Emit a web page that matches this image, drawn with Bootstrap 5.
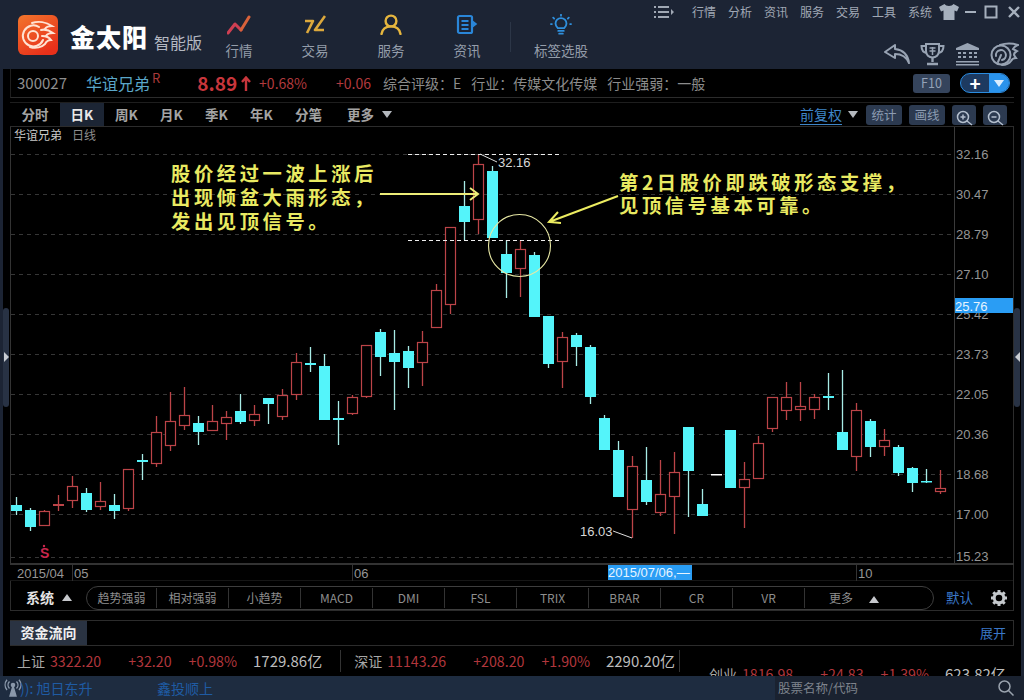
<!DOCTYPE html>
<html lang="zh-CN">
<head>
  <meta charset="UTF-8">
  <meta name="viewport" content="width=device-width, initial-scale=1.0">
  <title>金太阳 智能版</title>
  <link href="https://cdn.jsdelivr.net/npm/bootstrap@5.3.0/dist/css/bootstrap.min.css" rel="stylesheet">
  <style>
    html, body { height: 700px; overflow: hidden; }
    body { background: #1c2434; font-family: "Noto Sans CJK SC", "Liberation Sans", sans-serif; color: #a8a8a8; }
    .top { height: 69px; }
    .logo-box { width: 40px; height: 40px; margin: 15px 0 0 18px; }
    .logo-name { font-size: 25px; font-weight: 900; color: #fff; letter-spacing: 1px; margin: 17px 0 0 12px; line-height: 38px; }
    .logo-ver { font-size: 16px; color: #b4b9c2; margin: 31px 0 0 6px; line-height: 22px; }
    .mainnav { margin: 14px 0 0 -1px; width: 419px; }
    .mainnav .item { width: 76px; text-align: center; font-size: 13.5px; color: #949daa; line-height: 18px; }
    .mainnav svg { display: block; margin: 0 auto 6px; }
    .mainnav .sep { width: 1px; height: 30px; background: #2c3647; margin: 8px 12px 0 5px; }
    .topright { width: 370px; margin-left: auto; }
    .sysmenu { height: 24px; font-size: 12px; color: #a0a8b4; padding-right: 4px; }
    .sysmenu span { width: 36px; }
    .sysmenu .last { width: 27px; }
    .sys-ham { margin-right: 18px; }
    .sys-shirt { margin-left: 4px; }
    .sys-min { margin-left: 6px; }
    .sys-max { margin-left: 8px; }
    .sys-close { margin-left: 10px; }
    .sysicons { padding: 18px 5px 0 0; gap: 10px; }

    .main { position: relative; margin-left: 3px; width: 1018px; height: 607px; background: #000; padding: 0 7px; overflow: hidden; }
    .handle { position: absolute; top: 239px; width: 6px; height: 99px; background: #283244; border-radius: 3px; }
    .handle.l { left: 0; }
    .handle.r { right: 1px; }
    .handle i { position: absolute; top: 44px; left: 1px; border: 5px solid transparent; }
    .handle.l i { border-left-color: #c8ccd2; border-right-width: 0; }
    .handle.r i { border-right-color: #c8ccd2; border-left-width: 0; }

    .quote { height: 29px; border-bottom: 1px solid #2c2c2c; border-left: 1px solid #1e1e1e; padding-left: 6px; font-size: 14px; }
    .q-code { font-size: 15px; color: #8e8e8e; width: 69px; }
    .q-name { font-size: 16px; color: #5aa6c8; }
    .q-name sup { color: #a83a3a; font-size: 13px; top: -7px; margin-left: 2px; }
    .q-price { font-size: 19px; font-weight: 700; color: #c8363c; margin-left: 37px; }
    .q-red { font-size: 14px; color: #b23a3e; }
    .q-pct { margin-left: 8px; }
    .q-chg { margin-left: 29px; }
    .q-info { color: #8c8c8c; margin-left: 10px; }
    .q-info.first { margin-left: 12px; }
    .btn-f10 { --bs-btn-padding-y: 0; --bs-btn-padding-x: 0; width: 37px; height: 19px; line-height: 18px; font-size: 12.5px; background: #35445c; border: 0; color: #94a2b8; border-radius: 3px; }
    .addpill { width: 50px; height: 20px; border: 1px solid #2a8ce0; background: #1d3a60; margin: 0 4px 0 10px; overflow: hidden; color: #fff; }
    .addpill .plus { width: 28px; text-align: center; font-size: 19px; line-height: 17px; font-weight: 700; }
    .addpill .down { flex: 1; background: #2a93ec; }
    .tri-d, .tri-u { display: inline-block; width: 0; height: 0; border-left: 5px solid transparent; border-right: 5px solid transparent; }
    .tri-d { border-top: 7px solid #b4b8be; }
    .tri-d.pale { border-top-color: #dbeeff; }
    .tri-u { border-bottom: 7px solid #c6c8cc; }

    .tabs { height: 25px; margin-top: 4px; border-top: 1px solid #1e1e1e; border-bottom: 1px solid #2c2c2c; font-size: 13.5px; font-weight: 700; color: #a4a4a4; }
    .tabs .nav-link { padding: 0; color: inherit; height: 23px; line-height: 23px; text-align: center; width: 45px; }
    .tabs .nav-link.active { background: #1c2534; color: #e8e8e8; width: 44px; }
    .tabs .nav-link.first { width: 50px; }
    .tabs .nav-link.pen { width: 49px; }
    .tab-more { margin-left: 14px; }
    .fq { color: #3f86c8; font-weight: 400; font-size: 14px; border-bottom: 1px solid #3f86c8; line-height: 19px; margin-right: 6px; }
    .tool { background: #2c3a50; color: #8d9cb2; font-size: 12.5px; font-weight: 400; width: 36px; height: 20px; line-height: 19px; text-align: center; border-radius: 3px; margin-left: 7px; }
    .tool.ic { width: 24px; padding-top: 2px; }
    .tool.start { margin-left: 8px; }
    .tool.end { margin-right: 7px; }

    .chart { display: block; width: 1004px; height: 454px; }
    .chart text { font-family: "Liberation Sans", sans-serif; font-size: 13px; fill: #959595; dominant-baseline: central; }
    .chart .note { font-family: "Noto Sans CJK SC", sans-serif; font-size: 19.3px; font-weight: 700; fill: #e9ea62; letter-spacing: 3.6px; }
    .chart .ttl { font-family: "Noto Sans CJK SC", sans-serif; font-size: 12px; fill: #c8c8c8; }
    .chart .ttl.dim { fill: #8e8e8e; }
    .chart .lab { fill: #d8d8d8; }
    .chart .hl { fill: #e6f4ff; }
    .chart .stamp { font-weight: 700; fill: #c8264c; font-size: 14px; }

    .system { height: 30px; padding-top: 4px; border: 1px solid #2c2c2c; border-top: 0; font-size: 12px; }
    .sys-name { width: 75px; padding-left: 15px; font-weight: 700; font-size: 14px; color: #e4e4e4; }
    .pillbar { width: 848px; height: 24px; border: 1px solid #3e3e3e; border-radius: 12px; color: #8e8e8e; }
    .pillbar span { width: 72px; height: 20px; line-height: 19px; text-align: center; border-left: 1px solid #333; }
    .pillbar span:first-child { width: 69px; border-left: 0; }
    .pillbar span:last-child { flex: 1; padding-right: 30px; }
    .def { color: #3b78c8; font-size: 13.5px; margin-left: 12px; }
    .gear { margin-left: 18px; }

    .flow { height: 26px; margin-top: 9px; border: 1px solid #2c2c2c; border-width: 1px 1px 1px 0; }
    .flow-tab { width: 77px; background: #2a3342; color: #f0f0f0; font-weight: 700; font-size: 14px; text-align: center; line-height: 23px; }
    .flow-open { color: #3b78c8; font-size: 13px; padding-right: 7px; line-height: 23px; }

    .index { height: 31px; overflow: hidden; font-size: 14.2px; }
    .idx-line { line-height: 20px; padding: 4px 0 0 7px; white-space: nowrap; }
    .idx-line.second { margin-top: -8px; padding: 0 0 0 699px; }
    .idx-line b { font-weight: 400; font-size: 14px; color: #a6a6a6; margin-right: 5px; }
    .idx-line .up { color: #b0363c; }
    .idx-line .pr { margin-right: 27px; }
    .idx-line .ch { margin-right: 17px; }
    .idx-line .pc { margin-right: 16px; }
    .idx-line .am { color: #bcbcbc; font-size: 15px; }
    .idx-sep { width: 1px; height: 22px; background: #333; margin: 0 13px 0 18px; }
    .idx-sep.end { margin-left: 4px; }

    .status { height: 24px; background: #1e2c40; font-size: 14px; color: #1f5ba3; }
    .status .t1 { margin-left: -2px; width: 137px; }
    .searchbox { width: 249px; height: 24px; background: #1a2230; margin-left: auto; color: #7e838c; font-size: 12.5px; padding: 0 10px 0 3px; }
  </style>
</head>
<body>
  <!-- 顶部 -->
  <header class="top d-flex">
    <svg class="logo-box" viewBox="0 0 40 40">
      <defs><linearGradient id="lg" x1="0" y1="0" x2="0.6" y2="1"><stop offset="0" stop-color="#f2762c"/><stop offset="1" stop-color="#e8301a"/></linearGradient></defs>
      <rect width="40" height="40" rx="6" fill="url(#lg)"/>
      <g fill="none" stroke="#ffe3d2" stroke-width="2" stroke-linecap="round">
        <circle cx="15" cy="21" r="5"/>
        <path d="M21 12 A10.5 10.5 0 1 0 25 25"/>
        <path d="M14 8 C20 6 28 7 34 11 C30 11 28 12 27 14"/>
        <path d="M23 15 C27 14 31 15 35 18 C31 18 29 19 28 21"/>
        <path d="M24 21 C28 21 31 22 33 25 C30 25 28 27 27 29 C24 32 18 34 12 32"/>
      </g>
    </svg>
    <div class="logo-name">金太阳</div>
    <div class="logo-ver">智能版</div>
    <div class="mainnav d-flex">
      <div class="item">
        <svg width="24" height="21" viewBox="0 0 24 21" fill="none" stroke-width="3" stroke-linecap="round" stroke-linejoin="round"><path d="M1 19 L8 10 L14 16" stroke="#cf3f52"/><path d="M14 16 L22 3" stroke="#d8623a"/></svg>
        行情
      </div>
      <div class="item">
        <svg width="22" height="21" viewBox="0 0 22 21" fill="none" stroke="#dca83c" stroke-width="2.6" stroke-linejoin="round"><path d="M1 7 H9 L3 19"/><path d="M21 2 L11 16 H20"/></svg>
        交易
      </div>
      <div class="item">
        <svg width="22" height="21" viewBox="0 0 22 21" fill="none" stroke="#e6b63e" stroke-width="2.4"><circle cx="11" cy="7" r="5.4"/><path d="M1.5 20 C2.5 14 6 12.4 11 12.4 S19.5 14 20.5 20" stroke-linecap="round"/></svg>
        服务
      </div>
      <div class="item">
        <svg width="22" height="21" viewBox="0 0 22 21" fill="none" stroke="#2a86d8" stroke-width="2.2"><rect x="2" y="2" width="14" height="17" rx="1.5"/><path d="M5.5 7 H12.5 M5.5 11 H12.5 M5.5 15 H12.5"/><path d="M16 7 L20 10 L16 13" stroke-width="1.6" fill="#2a86d8"/></svg>
        资讯
      </div>
      <div class="sep"></div>
      <div class="item">
        <svg width="24" height="21" viewBox="0 0 24 23" fill="none" stroke="#2f8fdc" stroke-width="2" stroke-linecap="round"><path d="M8.5 15.5 C6.5 13.5 6 12 6 10.5 A6 6 0 0 1 18 10.5 C18 12 17.5 13.5 15.5 15.5 Z"/><path d="M9 18.5 H15 M10 21.5 H14"/><path d="M12 .8 V1.8 M3.5 4 L4.5 5 M20.5 4 L19.5 5 M1 11 H2 M22 11 H23"/></svg>
        标签选股
      </div>
    </div>
    <div class="topright d-flex flex-column">
      <div class="sysmenu d-flex align-items-center justify-content-end">
        <svg class="sys-ham" width="20" height="14" viewBox="0 0 20 14" fill="#a0a8b4"><path d="M0 1h2v2H0zM0 6h2v2H0zM0 11h2v2H0zM4 1h11v2H4zM4 6h11v2H4zM4 11h11v2H4zM17 4l3 3-3 3z"/></svg>
        <span>行情</span><span>分析</span><span>资讯</span><span>服务</span><span>交易</span><span>工具</span><span class="last">系统</span>
        <svg class="sys-shirt" width="20" height="16" viewBox="0 0 20 16" fill="#a6b0bd"><path d="M5.5 0 L0 3 L2 7.5 L4.5 6.5 V16 H15.5 V6.5 L18 7.5 L20 3 L14.5 0 C13 2.5 7 2.5 5.5 0Z"/></svg>
        <svg class="sys-min" width="11" height="14" viewBox="0 0 11 14" fill="#a6b0bd"><rect y="6" width="11" height="2"/></svg>
        <svg class="sys-max" width="14" height="14" viewBox="0 0 14 14" fill="none" stroke="#a6b0bd" stroke-width="2"><rect x="1.5" y="1.5" width="11" height="11"/></svg>
        <svg class="sys-close" width="12" height="12" viewBox="0 0 12 12" fill="none" stroke="#a6b0bd" stroke-width="2.4"><path d="M1 1 L11 11 M11 1 L1 11"/></svg>
      </div>
      <div class="sysicons d-flex justify-content-end align-items-center">
        <svg width="26" height="20" viewBox="0 0 26 20" fill="none" stroke="#98a3b3" stroke-width="2" stroke-linejoin="round"><path d="M11 1 L1 8 L11 14 V10 C17 10 22 12 25 19 C24 11 19 6 11 5 Z"/></svg>
        <svg width="25" height="24" viewBox="0 0 25 24" fill="none" stroke="#98a3b3" stroke-width="2"><path d="M6 2 H19 V9 C19 13 16 15.5 12.5 15.5 S6 13 6 9 Z"/><path d="M6 4 H1.5 C1.5 8 3 10.5 7 11 M19 4 H23.5 C23.5 8 22 10.5 18 11"/><path d="M12.5 16 V20 M7 22 H18" stroke-width="2.4"/><path d="M9.5 6 H15.5 M9.5 9 H15.5 M12.5 5 V13" stroke-width="1.5"/></svg>
        <svg width="25" height="24" viewBox="0 0 25 24" fill="#98a3b3"><path d="M12.5 1 L24 6 V8 H1 V6Z"/><path d="M3 10h3v2H3zM8 10h3v2H8zM14 10h3v2h-3zM19 10h3v2h-3zM3 14h3v2H3zM8 14h3v2H8zM14 14h3v2h-3zM19 14h3v2h-3zM1 19h23v1.5H1zM1 22h23v1.5H1z"/></svg>
        <svg width="29" height="24" viewBox="0 0 29 24" fill="none" stroke="#98a3b3" stroke-width="2" stroke-linecap="round"><circle cx="11" cy="13" r="9.5"/><path d="M6 14 A5 5 0 1 1 12 18"/><path d="M11 13 L8 20"/><path d="M10 3 C16 1 22 1 28 3 C25 4 24 5 23 7 L27 9 C25 10 24 11 24 13 L26 16 C24 16 22 17 21 19 C19 22 16 23 12 23"/></svg>
      </div>
    </div>
  </header>

  <div class="main">
    <div class="handle l"><i></i></div>
    <div class="handle r"><i></i></div>

    <div class="quote d-flex align-items-center">
      <span class="q-code">300027</span>
      <span class="q-name">华谊兄弟<sup>R</sup></span>
      <span class="q-price">8.89</span>
      <svg class="ms-1" width="10" height="15" viewBox="0 0 10 15" fill="none" stroke="#c8363c" stroke-width="2.4"><path d="M5 15 V2 M1 6 L5 1.5 L9 6"/></svg>
      <span class="q-red q-pct">+0.68%</span>
      <span class="q-red q-chg">+0.06</span>
      <span class="q-info first">综合评级：E</span>
      <span class="q-info">行业：传媒文化传媒</span>
      <span class="q-info">行业强弱：一般</span>
      <button type="button" class="btn btn-f10 ms-auto">F10</button>
      <div class="addpill d-flex rounded-pill">
        <span class="plus">+</span>
        <span class="down d-flex align-items-center justify-content-center"><i class="tri-d pale"></i></span>
      </div>
    </div>

    <div class="tabs d-flex align-items-center">
      <nav class="nav">
        <a class="nav-link first" href="#">分时</a>
        <a class="nav-link active" href="#">日K</a>
        <a class="nav-link" href="#">周K</a>
        <a class="nav-link" href="#">月K</a>
        <a class="nav-link" href="#">季K</a>
        <a class="nav-link" href="#">年K</a>
        <a class="nav-link pen" href="#">分笔</a>
      </nav>
      <span class="tab-more d-flex align-items-center">更多<i class="tri-d ms-2"></i></span>
      <span class="fq ms-auto">前复权</span>
      <i class="tri-d"></i>
      <span class="tool start">统计</span>
      <span class="tool">画线</span>
      <span class="tool ic"><svg width="17" height="16" viewBox="0 0 17 16" fill="none" stroke="#b4bfce" stroke-width="1.5"><circle cx="7" cy="7" r="5.5"/><path d="M11 11 L16 15 M4.5 7 H9.5 M7 4.5 V9.5"/></svg></span>
      <span class="tool ic end"><svg width="17" height="16" viewBox="0 0 17 16" fill="none" stroke="#b4bfce" stroke-width="1.5"><circle cx="7" cy="7" r="5.5"/><path d="M11 11 L16 15 M4.5 7 H9.5"/></svg></span>
    </div>

    <!-- K线图，坐标直接用页面像素 -->
    <svg class="chart" id="chart" viewBox="10 127 1004 454"></svg>

    <div class="system d-flex align-items-center">
      <span class="sys-name d-flex align-items-center">系统<i class="tri-u ms-2"></i></span>
      <div class="pillbar d-flex align-items-center">
        <span>趋势强弱</span><span>相对强弱</span><span>小趋势</span><span>MACD</span><span>DMI</span><span>FSL</span><span>TRIX</span><span>BRAR</span><span>CR</span><span>VR</span>
        <span>更多<i class="tri-u ms-3"></i></span>
      </div>
      <span class="def">默认</span>
      <svg class="gear" width="16" height="16" viewBox="0 0 16 16"><circle cx="8" cy="8" r="4.8" fill="none" stroke="#c4c8cc" stroke-width="3"/><path d="M8 0V3M8 13V16M0 8H3M13 8H16M2.3 2.3L4.4 4.4M11.6 11.6L13.7 13.7M13.7 2.3L11.6 4.4M4.4 11.6L2.3 13.7" stroke="#c4c8cc" stroke-width="3"/></svg>
    </div>

    <div class="flow d-flex justify-content-between">
      <div class="flow-tab">资金流向</div>
      <div class="flow-open">展开</div>
    </div>

    <div class="index">
      <div class="idx-line d-flex align-items-center">
        <b>上证</b><span class="up pr">3322.20</span><span class="up ch">+32.20</span><span class="up pc">+0.98%</span><span class="am">1729.86亿</span>
        <i class="idx-sep"></i>
        <b>深证</b><span class="up pr">11143.26</span><span class="up ch">+208.20</span><span class="up pc">+1.90%</span><span class="am">2290.20亿</span>
        <i class="idx-sep end"></i>
      </div>
      <div class="idx-line second d-flex">
        <b>创业</b><span class="up pr">1816.98</span><span class="up ch">+24.83</span><span class="up pc">+1.39%</span><span class="am">623.82亿</span>
      </div>
    </div>
  </div>

  <footer class="status d-flex align-items-center">
    <svg class="ms-1" width="18" height="18" viewBox="0 0 18 18" fill="none" stroke="#8a98aa" stroke-width="1.4"><circle cx="9" cy="6" r="1.6" fill="#8a98aa"/><path d="M9 7 L6 17 H12 Z" fill="#8a98aa"/><path d="M5.5 2.5 A5 5 0 0 0 5.5 9.5 M12.5 2.5 A5 5 0 0 1 12.5 9.5 M3 .8 A8 8 0 0 0 3 11 M15 .8 A8 8 0 0 1 15 11"/></svg>
    <span class="t1">)): 旭日东升</span>
    <span>鑫投顺上</span>
    <div class="searchbox d-flex align-items-center justify-content-between">
      <span>股票名称/代码</span>
      <svg width="16" height="16" viewBox="0 0 16 16" fill="none" stroke="#9aa3ae" stroke-width="1.5"><circle cx="6.5" cy="6.5" r="5.5"/><path d="M10.5 10.5 L15.5 15.5"/></svg>
    </div>
  </footer>

  <script>
    // 每根K线：最高 开盘上沿 下沿 最低 颜色
    const candles = [
      [497,505,511,515,'c'],[508,510,527,531,'c'],[510,511,525,526,'r'],[495,504,506,511,'r'],[476,486,500,508,'r'],
      [488,493,510,512,'c'],[482,501,506,510,'r'],[494,505,511,519,'c'],[469,469,508,511,'r'],[454,460,462,480,'c'],
      [416,432,463,467,'r'],[392,421,445,451,'r'],[387,415,425,430,'r'],[416,423,432,445,'c'],[405,421,430,431,'r'],
      [411,417,423,440,'r'],[394,411,422,424,'c'],[405,414,420,426,'r'],[398,398,404,424,'c'],[389,395,416,420,'r'],
      [353,362,394,400,'r'],[347,363,365,372,'c'],[354,366,420,420,'c'],[401,418,420,445,'c'],[395,397,413,415,'r'],
      [345,345,396,398,'r'],[329,332,357,376,'c'],[330,353,362,410,'c'],[346,351,368,388,'c'],[331,342,362,386,'r'],
      [284,290,327,327,'r'],[227,227,304,314,'r'],[181,206,222,240,'c'],[154,164,219,234,'r'],[166,171,238,238,'c'],
      [240,254,273,298,'c'],[240,249,268,297,'r'],[252,255,317,317,'c'],[316,316,364,368,'c'],[332,337,361,388,'r'],
      [333,335,347,366,'c'],[345,347,397,404,'c'],[415,418,450,450,'c'],[441,450,497,497,'c'],[456,466,509,538,'r'],
      [447,480,502,505,'c'],[460,494,512,516,'r'],[452,472,496,534,'r'],[427,427,471,517,'c'],[489,504,516,516,'c'],
      [474,474,475,475,'w'],[430,430,488,488,'c'],[462,479,487,528,'r'],[436,443,478,478,'r'],[397,397,428,432,'r'],
      [382,397,410,420,'r'],[382,406,409,421,'r'],[394,397,409,419,'r'],[373,396,398,410,'c'],[370,432,450,450,'c'],
      [403,410,456,471,'r'],[419,421,447,457,'c'],[429,440,446,456,'r'],[445,447,473,476,'c'],[467,468,483,492,'c'],
      [469,481,482,483,'c'],[470,488,491,494,'r']
    ];
    const gridY = [154,194,234,274,314,354,394,434,474,514,557];
    const prices = ['32.16','30.47','28.79','27.10','25.42','23.73','22.05','20.36','18.68','17.00','15.23'];

    let s = '';
    s += '<line x1="10.5" y1="127" x2="10.5" y2="563" stroke="#333"/>';
    s += '<line x1="1013.5" y1="127" x2="1013.5" y2="581" stroke="#2c2c2c"/>';
    gridY.forEach(function (y) {
      s += `<line x1="11" y1="${y}.5" x2="954" y2="${y}.5" stroke="#363636" stroke-dasharray="4 4"/>`;
    });
    s += '<line x1="954.5" y1="127" x2="954.5" y2="563" stroke="#3a3a3a"/>';
    s += '<rect x="10" y="563" width="1004" height="2" fill="#333"/>';
    prices.forEach(function (p, i) {
      s += `<text x="956" y="${gridY[i] + (i == 10 ? -1 : 0)}">${p}</text>`;
    });
    s += '<rect x="955" y="298" width="58" height="15" fill="#2a9df4"/><text class="hl" x="955" y="306">25.76</text>';
    s += '<text class="ttl" x="14" y="134">华谊兄弟</text><text class="ttl dim" x="72" y="134">日线</text>';

    candles.forEach(function (c, i) {
      const x = 16.5 + 14 * i;
      const col = c[4] == 'c' ? '#54f4fa' : c[4] == 'r' ? '#bc4448' : '#fff';
      const wick = c[4] == 'c' ? '#a8ece6' : col;
      if (c[4] != 'w') s += `<line x1="${x}" y1="${c[0]}" x2="${x}" y2="${c[3]}" stroke="${wick}" stroke-width="1.3"/>`;
      const h = c[2] - c[1];
      if (c[4] == 'r' && h > 2) {
        s += `<rect x="${x - 5}" y="${c[1] + 0.5}" width="10" height="${h}" fill="#000" stroke="${col}" stroke-width="1.2"/>`;
      } else {
        s += `<rect x="${x - 5.5}" y="${c[1]}" width="11" height="${Math.max(h, 1.5)}" fill="${col}"/>`;
      }
    });

    // 标注
    s += '<line x1="408" y1="154.5" x2="562" y2="154.5" stroke="#eee" stroke-dasharray="4 3"/>';
    s += '<line x1="408" y1="240.5" x2="562" y2="240.5" stroke="#eee" stroke-dasharray="4 3"/>';
    s += '<path d="M480 154 L497 162" stroke="#ddd" fill="none"/><text class="lab" x="498" y="162">32.16</text>';
    s += '<path d="M632 538 L613 531" stroke="#ddd" fill="none"/><text class="lab" x="580" y="531">16.03</text>';
    s += '<circle cx="519.5" cy="245.5" r="31" fill="none" stroke="#e8e8a4" stroke-width="1.1"/>';
    s += '<path d="M380 194 H478 M470 188 L478 194 L470 200" fill="none" stroke="#ecec78" stroke-width="2"/>';
    s += '<path d="M618 196 L549 222 M558 212 L549 222 L561 223" fill="none" stroke="#ecec60" stroke-width="2"/>';
    ['股价经过一波上涨后','出现倾盆大雨形态，','发出见顶信号。'].forEach(function (t, i) {
      s += `<text class="note" x="171" y="${173 + 24 * i}">${t}</text>`;
    });
    s += '<text class="note" x="619" y="182">第2日股价即跌破形态支撑，</text><text class="note" x="619" y="205">见顶信号基本可靠。</text>';
    s += '<circle cx="44" cy="546" r="1.2" fill="#c8264c"/><text class="stamp" x="40" y="553">S</text>';

    // 日期轴
    [72, 352, 856].forEach(function (x) {
      s += `<line x1="${x}.5" y1="565" x2="${x}.5" y2="581" stroke="#333"/>`;
    });
    s += '<text x="17" y="573">2015/04</text><text x="74" y="573">05</text><text x="354" y="573">06</text><text x="858" y="573">10</text>';
    s += '<rect x="608" y="565" width="84" height="15" fill="#2a9df4"/><text class="hl" x="608" y="572">2015/07/06,—</text>';
    s += '<line x1="10" y1="581" x2="1014" y2="581" stroke="#2c2c2c" stroke-width="1"/>';
    document.getElementById('chart').innerHTML = s;
  </script>
  <script src="https://cdn.jsdelivr.net/npm/bootstrap@5.3.0/dist/js/bootstrap.bundle.min.js"></script>
</body>
</html>
